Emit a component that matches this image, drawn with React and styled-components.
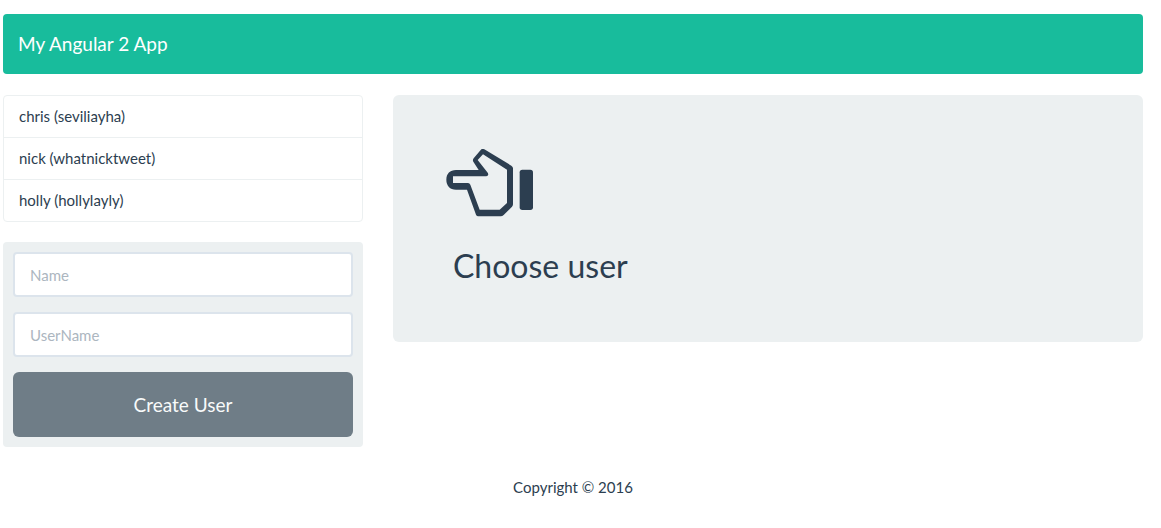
import React, { useState } from "react";
import styled, { createGlobalStyle } from "styled-components";

const GlobalStyle = createGlobalStyle`
  *, *::before, *::after { box-sizing: border-box; }
  body {
    margin: 0;
    background: #ffffff;
    color: #2c3e50;
    font-family: Lato, "Liberation Sans", sans-serif;
    font-size: 15px;
    line-height: 21px;
  }
`;

const Page = styled.div`
  padding: 14px 18px 30px 3px;
`;

const Navbar = styled.header`
  display: flex;
  align-items: center;
  height: 60px;
  padding: 0 15px;
  margin-bottom: 21px;
  border-radius: 4px;
  background: #18bc9c;
`;

const Brand = styled.a`
  color: #ffffff;
  font-size: 19px;
  line-height: 20px;
  text-decoration: none;
`;

const Columns = styled.main`
  display: grid;
  grid-template-columns: calc((100% - 60px) / 3) 1fr;
  gap: 30px;
  align-items: start;
`;

const UserList = styled.ul`
  list-style: none;
  margin: 0 0 20px;
  padding: 0;
  border: 1px solid #ecf0f1;
  border-radius: 4px;
`;

const UserItem = styled.li`
  padding: 10px 15px;
  & + & {
    border-top: 1px solid #ecf0f1;
  }
`;

const UserForm = styled.form`
  display: flex;
  flex-direction: column;
  gap: 15px;
  padding: 10px;
  border-radius: 4px;
  background: #ecf0f1;
`;

const Field = styled.input`
  width: 100%;
  height: 45px;
  padding: 10px 15px;
  border: 2px solid #dce4ec;
  border-radius: 4px;
  background: #ffffff;
  color: #2c3e50;
  font: inherit;
  &::placeholder {
    color: #acb6c0;
    opacity: 1;
  }
`;

const SubmitButton = styled.button`
  width: 100%;
  padding: 18px 27px;
  border: 0;
  border-radius: 6px;
  background: #6f7d87;
  color: #f8fafa;
  font-family: inherit;
  font-size: 19px;
  line-height: 29px;
`;

const Jumbotron = styled.section`
  padding: 54px 53px;
  border-radius: 6px;
  background: #ecf0f1;
`;

const HandIcon = styled.svg`
  display: block;
`;

const Prompt = styled.h1`
  margin: 28px 0 2px;
  padding: 0 7px;
  font-size: 32px;
  font-weight: 400;
  line-height: 41px;
`;

const Footer = styled.footer`
  margin-top: 30px;
  text-align: center;
`;

const users = [
  { name: "chris", username: "seviliayha" },
  { name: "nick", username: "whatnicktweet" },
  { name: "holly", username: "hollylayly" },
];

export default function App() {
  const [name, setName] = useState("");
  const [username, setUsername] = useState("");

  return (
    <>
      <GlobalStyle />
      <Page>
        <Navbar>
          <Brand href="/">My Angular 2 App</Brand>
        </Navbar>
        <Columns>
          <aside>
            <UserList>
              {users.map((user) => (
                <UserItem key={user.username}>
                  {user.name} ({user.username})
                </UserItem>
              ))}
            </UserList>
            <UserForm onSubmit={(event) => event.preventDefault()}>
              <Field
                aria-label="Name"
                placeholder="Name"
                value={name}
                onChange={(event) => setName(event.target.value)}
              />
              <Field
                aria-label="UserName"
                placeholder="UserName"
                value={username}
                onChange={(event) => setUsername(event.target.value)}
              />
              <SubmitButton type="submit">Create User</SubmitButton>
            </UserForm>
          </aside>
          <Jumbotron>
            <HandIcon width="88" height="68" viewBox="0 0 264 204" aria-hidden="true">
              <path
                fill="#2c3e50"
                fillRule="evenodd"
                d="M106 1Q110-2 115 1L196 50Q201 53 201 58V166Q201 170 198 173L173 198Q169 202 164 202H97Q92 202 90 197L63 122H30C12 122 1 110 1 92C1 74 12 63 30 63H98L82 38Q79 33 83 28ZM111 16L95 33L124 70Q128 75 126 79Q124 82 120 82H21V102H66Q71 102 73 107L101 182H161L183 162V62Z"
              />
              <rect x="221" y="62" width="40" height="121" rx="8" fill="#2c3e50" />
            </HandIcon>
            <Prompt>Choose user</Prompt>
          </Jumbotron>
        </Columns>
        <Footer>Copyright © 2016</Footer>
      </Page>
    </>
  );
}
